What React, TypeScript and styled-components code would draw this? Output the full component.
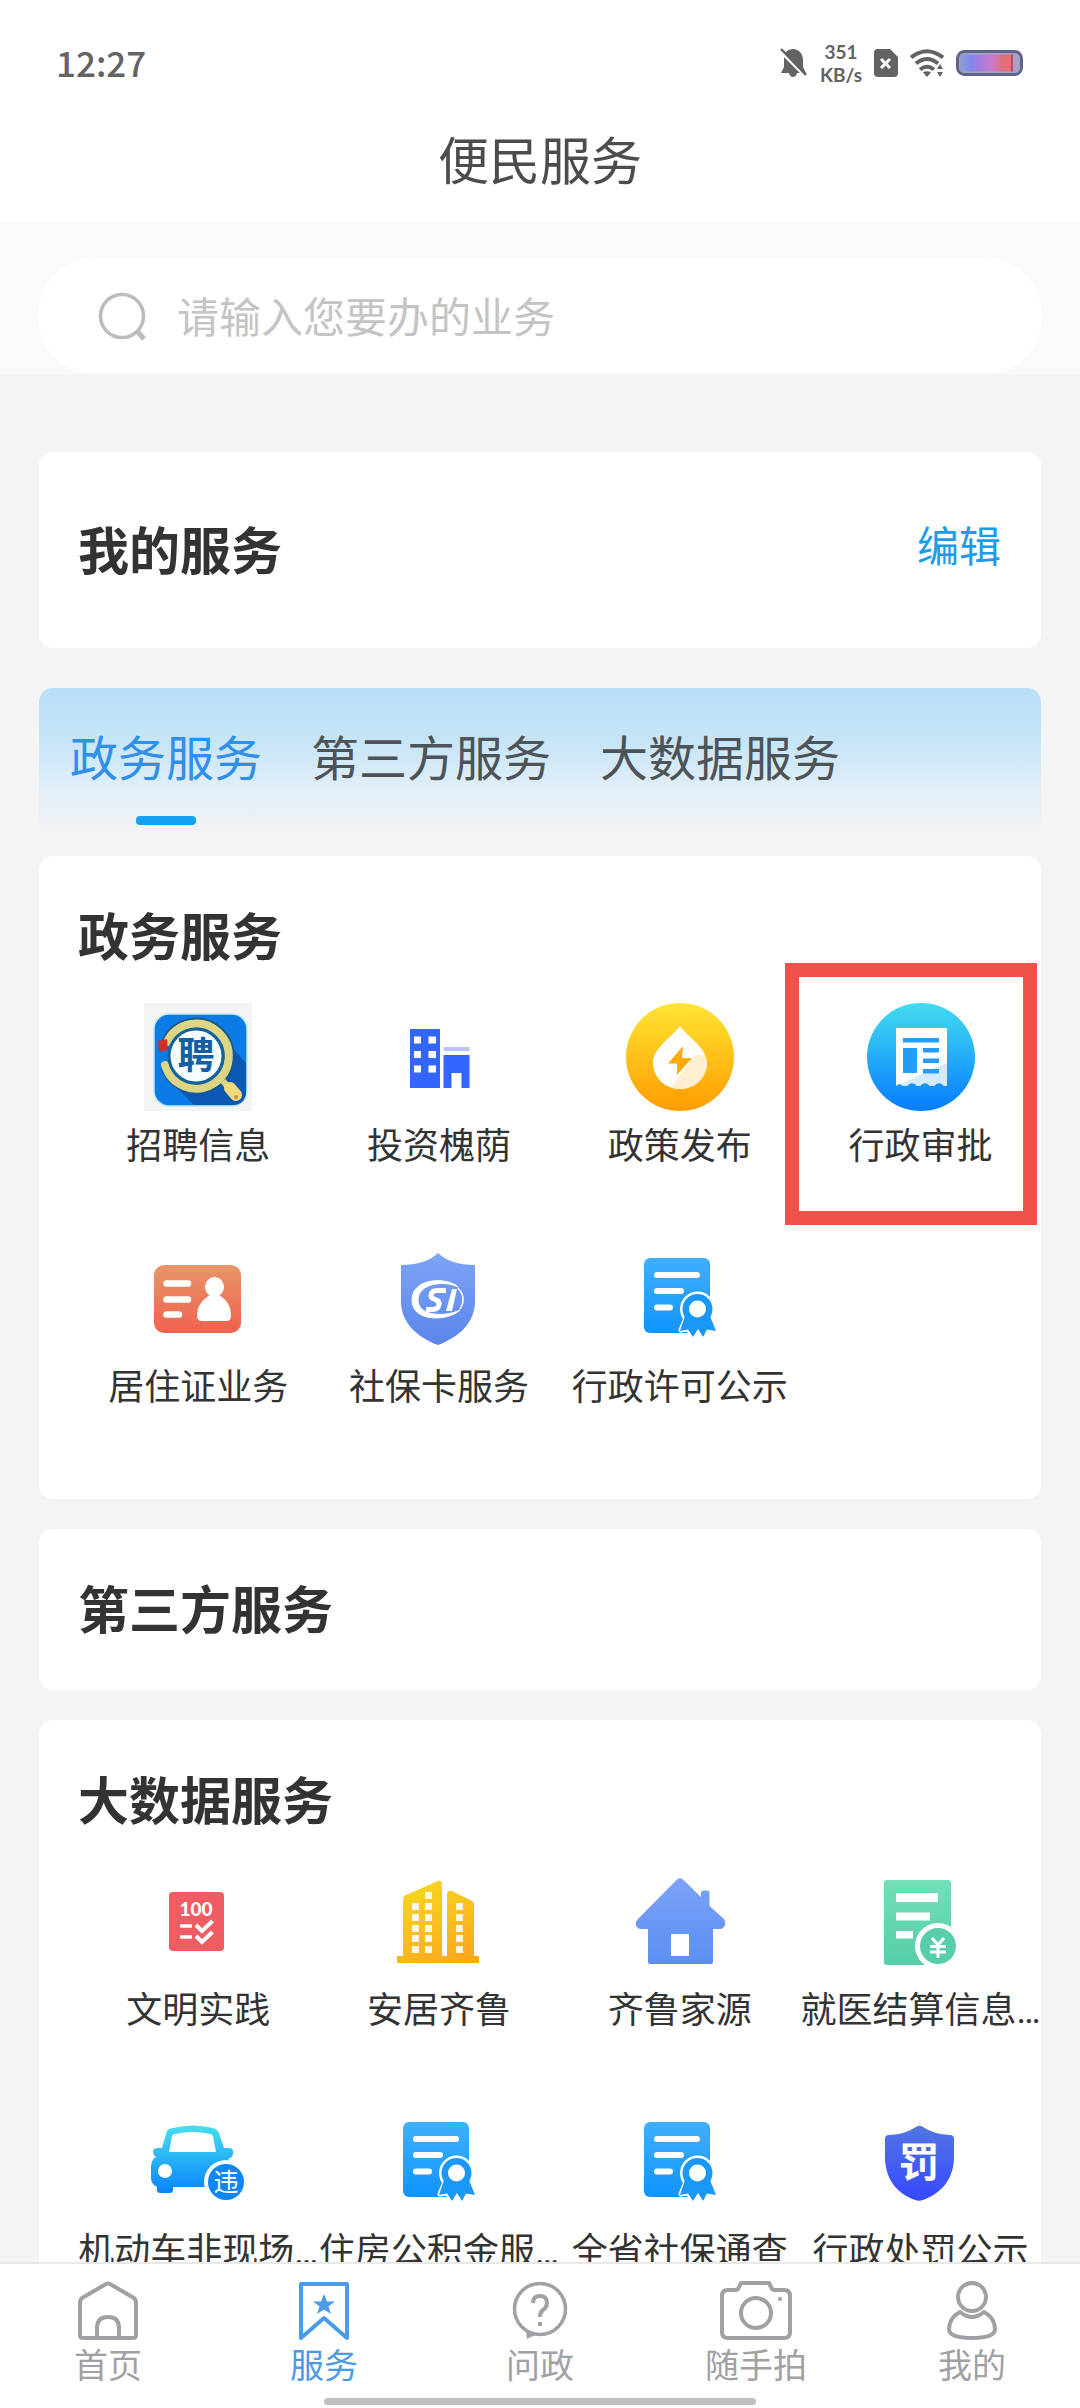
import React, { useId, useState } from 'react';
import styled, { createGlobalStyle } from 'styled-components';

const GlobalStyle = createGlobalStyle`
  * {
    box-sizing: border-box;
  }
  body {
    margin: 0;
    background: #f4f4f4;
    color: #333;
    font-family: "Noto Sans CJK SC", sans-serif;
  }
  button, input {
    font-family: inherit;
  }
  a {
    color: inherit;
    text-decoration: none;
  }
`;

const Page = styled.div`
  height: 100vh;
  display: flex;
  flex-direction: column;
`;

/* ---------- header ---------- */

const Header = styled.header`
  background: #fff;
  padding-bottom: 31px;
`;

const StatusBar = styled.div`
  display: flex;
  align-items: center;
  justify-content: space-between;
  height: 126px;
  padding: 0 57px 0 56px;
  color: #636363;
`;

const Clock = styled.time`
  padding-bottom: 4px;
  font-size: 35px;
  font-weight: 500;
`;

const StatusIcons = styled.div`
  display: flex;
  align-items: center;
  gap: 12px;
`;

const NetSpeed = styled.div`
  font-family: Lato, sans-serif;
  font-size: 19px;
  line-height: 23px;
  font-weight: 700;
  text-align: center;
`;

const PageTitle = styled.h1`
  margin: 0;
  font-size: 51px;
  line-height: 64px;
  font-weight: 400;
  text-align: center;
  color: #4c4c4c;
`;

/* ---------- content ---------- */

const Content = styled.main`
  flex: 1;
  min-height: 0;
  overflow-y: auto;
  scrollbar-width: none;
`;

const SearchBand = styled.div`
  background: #fafafa;
  padding: 37px 38px 0;
`;

const SearchBox = styled.label`
  display: flex;
  align-items: center;
  gap: 30px;
  height: 116px;
  padding: 0 60px;
  border-radius: 58px;
  background: #fff;
`;

const SearchInput = styled.input`
  flex: 1;
  min-width: 0;
  padding: 0 0 3px;
  border: 0;
  outline: 0;
  background: none;
  color: #333;
  font-size: 42px;
  line-height: 60px;

  &::placeholder {
    color: #c4c4c4;
    opacity: 1;
  }
`;

const Sections = styled.div`
  padding: 78px 39px 40px;
`;

const Card = styled.section`
  background: #fff;
  border-radius: 14px;
  padding: 40px 0 41px 39px;
  margin-bottom: 30px;
`;

const MyCard = styled(Card)`
  display: flex;
  justify-content: space-between;
  padding: 58px 40px 58px 39px;
  margin-bottom: 40px;
`;

const CardTitle = styled.h2`
  margin: 0 0 4px;
  font-size: 51px;
  line-height: 76px;
  font-weight: 700;
`;

const EditButton = styled.button`
  align-self: flex-start;
  padding: 0;
  border: 0;
  background: none;
  color: #1b9be8;
  font-size: 42px;
  line-height: 68px;
`;

const Tabs = styled.div`
  display: flex;
  gap: 49px;
  padding: 37px 31px 15px;
  margin-bottom: 16px;
  border-radius: 14px 14px 0 0;
  background: linear-gradient(#b8dff6, #c6e5f7 35%, #e3eff8 68%, #f4f4f4);
`;

const Tab = styled.button<{ $active: boolean }>`
  display: flex;
  flex-direction: column;
  align-items: center;
  padding: 0;
  border: 0;
  background: none;
  color: ${(props) => (props.$active ? '#2f8fea' : '#4d5356')};
  font-size: 48px;
  line-height: 60px;

  &::after {
    content: '';
    width: 60px;
    height: 9px;
    margin-top: 31px;
    border-radius: 4px;
    background: ${(props) => (props.$active ? '#18a0f5' : 'transparent')};
  }
`;

const Grid = styled.div`
  display: grid;
  grid-template-columns: repeat(4, 1fr);
  grid-auto-rows: 241px;
`;

const Item = styled.a<{ $marked?: boolean }>`
  position: relative;
  display: flex;
  flex-direction: column;
  align-items: center;
  padding-top: 27px;

  &::after {
    content: '';
    display: ${(props) => (props.$marked ? 'block' : 'none')};
    position: absolute;
    inset: -13px 4px -8px -15px;
    border: 14px solid #f0524b;
  }
`;

const ItemIcon = styled.svg`
  width: 108px;
  height: 108px;
`;

const ItemLabel = styled.span`
  margin-top: 11px;
  font-family: Roboto, "Noto Sans CJK SC", sans-serif;
  font-size: 36px;
  line-height: 50px;
  white-space: nowrap;
`;

/* ---------- bottom navigation ---------- */

const BottomBar = styled.footer`
  background: #fff;
  border-top: 2px solid #e8e8e8;
  padding: 16px 0 3px;
`;

const Nav = styled.nav`
  display: flex;
`;

const NavItem = styled.a<{ $active?: boolean }>`
  flex: 1;
  display: flex;
  flex-direction: column;
  align-items: center;
  color: ${(props) => (props.$active ? '#4a9be8' : '#a0a0a5')};
  font-size: 34px;
  line-height: 48px;
`;

const NavIcon = styled.svg`
  width: 80px;
  height: 60px;
  fill: none;
  stroke: currentColor;
  stroke-width: 4;
  stroke-linejoin: round;
`;

const HomeIndicator = styled.div`
  width: 40%;
  height: 7px;
  margin: 10px auto 0;
  border-radius: 4px;
  background: #c1c1c1;
`;

/* ---------- service icons ---------- */

type FadeProps = { id: string; from: string; to: string };

const Fade = ({ id, from, to }: FadeProps) => (
  <linearGradient id={id} x1="0" y1="0" x2="0" y2="1">
    <stop offset="0" stopColor={from} />
    <stop offset="1" stopColor={to} />
  </linearGradient>
);

const RecruitIcon = () => (
  <ItemIcon viewBox="0 0 108 108">
    <rect width="108" height="108" fill="#f4f4f4" />
    <rect x="10" y="11" width="93" height="92" rx="15" fill="#0c7be6" stroke="#bdeaf8" strokeWidth="1.5" />
    <path d="M78 33 102 60V88Q102 102 88 102H50L30 82Z" fill="#0a58b4" />
    <path d="M23 39A32.5 32.5 0 1 1 22 64" fill="none" stroke="#1a5a80" strokeWidth="11" />
    <path d="M23 39A32.5 32.5 0 1 1 21 62" fill="none" stroke="#dcd586" strokeWidth="8" strokeLinecap="round" />
    <circle cx="52" cy="53" r="27" fill="#f4fcff" stroke="#12639c" strokeWidth="3" />
    <path d="m14 38 9-2 1 11-9 2Z" fill="#cf2d2b" />
    <path d="m79 78 5 6" stroke="#dcd586" strokeWidth="6" />
    <path d="m86 85 6 7" stroke="#f0da7c" strokeWidth="12" strokeLinecap="round" />
    <circle cx="92" cy="94" r="2" fill="#c58a2c" />
    <text x="52" y="66" textAnchor="middle" fontSize="37" fontWeight="700" fill="#145ea6">聘</text>
  </ItemIcon>
);

const InvestIcon = () => (
  <ItemIcon viewBox="0 0 108 108">
    <path d="M25 26h30v59H25ZM58.500 52h26v33h-8V70h-10v15h-8Z" fill="#3366ff" />
    <path d="M58.500 44h26v4h-26Z" fill="#b7c5f4" />
    <path
      d="M29 33.500h7v7h-7ZM43.500 33.500h7.500v7h-7.500ZM29 48h7v7h-7ZM43.500 48h7.500v7h-7.500ZM29 62.500h7v7h-7ZM43.500 62.500h7.500v7h-7.500Z"
      fill="#fff"
    />
  </ItemIcon>
);

const PolicyIcon = () => (
  <ItemIcon viewBox="0 0 108 108">
    <defs>
      <Fade id="policy" from="#ffe534" to="#ff9c00" />
      <clipPath id="drop">
        <path d="M54 23C61 33 81 45 81 60A27 26 0 0 1 27 60C27 45 47 33 54 23Z" />
      </clipPath>
    </defs>
    <circle cx="54" cy="54" r="54" fill="url(#policy)" />
    <g clipPath="url(#drop)">
      <rect x="20" y="20" width="70" height="70" fill="#fff" />
      <path d="M69 52 44 86 90 90V52Z" fill="#fdefcf" />
    </g>
    <path d="M57 43 42 60.500h9L51 72 66 55H56Z" fill="#fdab0f" />
  </ItemIcon>
);

const ApprovalIcon = () => (
  <ItemIcon viewBox="0 0 108 108">
    <defs>
      <Fade id="approval" from="#42dcf1" to="#067cff" />
      <clipPath id="receipt">
        <path d="M29 25H80V83H77Q75 80 72 80T67 83H63Q61 80 58 80T53 83H50Q48 80 45 80T40 83H36Q34 81 32 81L29 83Z" />
      </clipPath>
    </defs>
    <circle cx="54" cy="54" r="54" fill="url(#approval)" />
    <g clipPath="url(#receipt)">
      <path d="M29 25h51v60H29Z" fill="#fff" />
      <path d="M80 60 62 67 29 84H80Z" fill="#d5eafc" />
    </g>
    <path d="M36 35h36v4.500H36ZM36 45h14v25H36ZM56 45h16v4.500H56ZM56 55.500h16v4.500H56ZM56 66h16v4.500H56Z" fill="#229dfb" />
  </ItemIcon>
);

const ResidenceIcon = () => (
  <ItemIcon viewBox="0 0 108 108">
    <defs>
      <Fade id="residence" from="#e8966a" to="#f0614f" />
    </defs>
    <rect x="10" y="21" width="87" height="68" rx="10" fill="url(#residence)" />
    <path d="M22.500 39.500H44M22.500 55.500H44M22.500 70.500H35" stroke="#fff" strokeWidth="6.500" strokeLinecap="round" />
    <ellipse cx="70.500" cy="43" rx="9.500" ry="10" fill="#fff" />
    <path d="M66 51h9C83 56 87 62 87 72Q87 77 82 77H58Q53 77 53 72C53 62 58 56 66 51Z" fill="#fff" />
  </ItemIcon>
);

const SocialCardIcon = () => (
  <ItemIcon viewBox="0 0 108 108">
    <defs>
      <Fade id="social" from="#7da4f8" to="#5a86ea" />
    </defs>
    <path d="M53 9C61 17 74 21 90 21V57C90 79 74 93 53 101C32 93 16 79 16 57V21C32 21 45 17 53 9Z" fill="url(#social)" />
    {/* tapering ring */}
    <path
      d="M73 43C63 33 27 33 27 56C27 79 64 77 75 66C62 73 33 73 33 56C33 39 60 36 73 43Z"
      fill="#fff"
      stroke="#fff"
      strokeWidth="1"
    />
    <path d="M73 44Q82 54 75 65" fill="none" stroke="#fff" strokeWidth="1.500" />
    <path
      d="M61 46.500H52Q47 46.500 46 51Q45.500 54 50 55.500Q55 57 54 61Q53 65.500 48 65.500H41"
      fill="none"
      stroke="#fff"
      strokeWidth="5"
    />
    <path d="M67 45H72L67 67H61Z" fill="#fff" />
  </ItemIcon>
);

const CertificateIcon = () => {
  const id = useId();
  return (
    <ItemIcon viewBox="0 0 108 108">
      <defs>
        <Fade id={id} from="#3fb0ff" to="#0f95fb" />
      </defs>
      <rect x="18" y="14" width="66" height="75" rx="6" fill={`url(#${id})`} />
      <path d="M31 31H71M31 47H55M31 63.500H44" stroke="#fff" strokeWidth="6" strokeLinecap="round" />
      <g fill="#fff" stroke="#fff" strokeWidth="5" strokeLinejoin="round">
        <path d="M60 74 55 86 62 85 67 92 72 84 77 92 81 85 89 86 83 74Z" />
        <circle cx="71.500" cy="65" r="15" />
      </g>
      <path d="M59 72 54 87 62 85.500 67 93 72 85 77 93 81 85.500 90 87 84 72Z" fill="#1b97f8" />
      <circle cx="71.500" cy="65" r="15" fill="#1b97f8" />
      <circle cx="71.500" cy="65" r="8.500" fill="#fff" />
    </ItemIcon>
  );
};

const CivilIcon = () => (
  <ItemIcon viewBox="0 0 108 108">
    <rect x="25" y="25" width="55" height="59" rx="4" fill="#f05c64" />
    <text x="52" y="49" textAnchor="middle" fontFamily="Lato, sans-serif" fontSize="19" fontWeight="900" fill="#fff">100</text>
    <path d="M36 59H48M36 70H48" stroke="#fff" strokeWidth="3.500" />
    <path d="M52 58 58 64 68.500 54M52 69 58 75 68.500 65" fill="none" stroke="#fff" strokeWidth="4" />
  </ItemIcon>
);

const HousingIcon = () => (
  <ItemIcon viewBox="0 0 108 108">
    <defs>
      <linearGradient id="housing" gradientUnits="userSpaceOnUse" x1="30" y1="15" x2="70" y2="96">
        <stop offset="0" stopColor="#f5d820" />
        <stop offset="1" stopColor="#fda81c" />
      </linearGradient>
    </defs>
    <path
      d="M18 32Q18 29 21 28L53 14Q57 13 57 17V89H62V28Q62 23 67 24L87 34Q89 35 89 38V89H94V96H12V89H18Z"
      fill="url(#housing)"
    />
    <path d="M57 20h5v69h-5Z" fill="#fff" />
    <g fill="#fff8de">
      <rect x="40" y="25" width="7" height="7" />
      {[36, 47, 58, 68, 79].map((y) => (
        <React.Fragment key={y}>
          <rect x="27" y={y} width="7" height="7" />
          <rect x="40" y={y} width="7" height="7" />
          <rect x="71" y={y} width="7" height="7" />
        </React.Fragment>
      ))}
    </g>
  </ItemIcon>
);

const HouseIcon = () => (
  <ItemIcon viewBox="0 0 108 108">
    <defs>
      <Fade id="house" from="#7ca3f8" to="#5a8ff2" />
    </defs>
    <path
      d="M51 12.500Q54 10 57 12.500L75 30V26Q75 23.500 77 23.500H81Q83.500 23.500 83.500 26V39L98 52Q101 57 97 61Q96 62 94 62H87V95Q87 97 85 97H24Q22 97 22 95V62H15Q12 62 11 60Q8 56 12 52Z"
      fill="url(#house)"
    />
    <rect x="45" y="67" width="18" height="22" rx="1" fill="#fff" />
  </ItemIcon>
);

const MedicalIcon = () => (
  <ItemIcon viewBox="0 0 108 108">
    <defs>
      <Fade id="medical" from="#72e0b6" to="#57cdaa" />
    </defs>
    <rect x="17" y="13" width="67" height="85" rx="3" fill="url(#medical)" />
    <path d="M29 26H71V35H29ZM29 45.500H63V53.500H29ZM29 64H46V71.500H29Z" fill="#fff" />
    <circle cx="71" cy="79" r="23" fill="#fff" />
    <circle cx="71" cy="79" r="18" fill="#58cdab" />
    <path d="m65 71 6 7 6-7M71 78v13M63 79.500h16M63 85h16" fill="none" stroke="#fff" strokeWidth="3" />
  </ItemIcon>
);

const CarIcon = () => (
  <ItemIcon viewBox="0 0 108 108">
    <defs>
      <Fade id="car" from="#47dfee" to="#0884fe" />
    </defs>
    <path
      d="M23 23Q24 21 29 20Q49 15 69 20Q73 21 75 25L80 40H86Q90 41 89 46Q88 50 84 51Q91 56 91 66V79H29V82Q29 85 26 85H16Q13 85 13 82V79Q7 76 7 70V59Q7 52 12 49Q9 47 9 44Q9 40 14 40H18Z"
      fill="url(#car)"
    />
    <path d="M25 44 28 28Q29 26 31 26Q49 22 66 26Q68 26 69 28L72 44Z" fill="#fff" />
    <circle cx="21" cy="63" r="7" fill="#fff" />
    <circle cx="82" cy="74" r="22" fill="#fff" />
    <circle cx="82" cy="74" r="18" fill="#0d87f4" />
    <text x="82" y="83" textAnchor="middle" fontSize="25" fill="#fff">违</text>
  </ItemIcon>
);

const PenaltyIcon = () => (
  <ItemIcon viewBox="0 0 108 108">
    <defs>
      <Fade id="penalty" from="#5276e2" to="#3648ff" />
    </defs>
    <path
      d="M48 19.500Q52.500 16 57 19.500Q66 26 83 27Q87 27 87 31V49C87 72 73 86 56 92Q52 93.500 48 92C31 86 18 72 18 49V31Q18 27 22 27Q39 26 48 19.500Z"
      fill="url(#penalty)"
    />
    <text x="52" y="69" textAnchor="middle" fontSize="41" fontWeight="700" fill="#fff">罚</text>
  </ItemIcon>
);

/* ---------- data ---------- */

type Service = { name: string; icon: React.FC; marked?: boolean };

const govServices: Service[] = [
  { name: '招聘信息', icon: RecruitIcon },
  { name: '投资槐荫', icon: InvestIcon },
  { name: '政策发布', icon: PolicyIcon },
  { name: '行政审批', icon: ApprovalIcon, marked: true },
  { name: '居住证业务', icon: ResidenceIcon },
  { name: '社保卡服务', icon: SocialCardIcon },
  { name: '行政许可公示', icon: CertificateIcon },
];

const dataServices: Service[] = [
  { name: '文明实践', icon: CivilIcon },
  { name: '安居齐鲁', icon: HousingIcon },
  { name: '齐鲁家源', icon: HouseIcon },
  { name: '就医结算信息…', icon: MedicalIcon },
  { name: '机动车非现场…', icon: CarIcon },
  { name: '住房公积金服…', icon: CertificateIcon },
  { name: '全省社保通查', icon: CertificateIcon },
  { name: '行政处罚公示', icon: PenaltyIcon },
];

const tabNames = ['政务服务', '第三方服务', '大数据服务'];

const ServiceGrid = ({ services }: { services: Service[] }) => (
  <Grid>
    {services.map(({ name, icon: Icon, marked }) => (
      <Item key={name} href="#" $marked={marked}>
        <Icon />
        <ItemLabel>{name}</ItemLabel>
      </Item>
    ))}
  </Grid>
);

const StatusBarIcons = () => (
  <StatusIcons>
    <svg width="28" height="30" viewBox="0 0 28 30" fill="currentColor">
      <path d="M13 1C19 1 23 6 23 12V19L26 25H17Q16 29 13 29T9 25H1L4 19V11Q4 1 13 1Z" />
      <path d="M-1 2 27 30" stroke="#fff" strokeWidth="3" />
      <path d="M1 1 26 27" stroke="currentColor" strokeWidth="2.500" />
    </svg>
    <NetSpeed>
      351
      <br />
      KB/s
    </NetSpeed>
    <svg width="24" height="28" viewBox="0 0 24 28">
      <path d="M4 0H16L24 8V24Q24 28 20 28H4Q0 28 0 24V4Q0 0 4 0Z" fill="currentColor" />
      <path d="m7 10 9 9M16 10l-9 9" stroke="#fff" strokeWidth="3" />
    </svg>
    <svg width="34" height="28" viewBox="0 0 34 28" fill="none" stroke="currentColor" strokeWidth="4">
      <path d="M1 8.500Q17-4 33 8.500M6 14.500Q17 5.500 28 14.500M10 20.500Q17 15 24 20.500" />
      <path d="M13 23.500Q17 21 21 23.500L17 28ZM30 15l3 5h-6ZM30 28l3-5h-6Z" fill="currentColor" stroke="none" />
    </svg>
    <svg width="67" height="26" viewBox="0 0 67 26">
      <defs>
        <linearGradient id="battery">
          <stop offset="0" stopColor="#8e9fca" />
          <stop offset="0.200" stopColor="#8189f2" />
          <stop offset="0.400" stopColor="#a77ddc" />
          <stop offset="0.620" stopColor="#ca7acb" />
          <stop offset="0.820" stopColor="#df6f78" />
        </linearGradient>
      </defs>
      <rect x="1.500" y="1.500" width="64" height="23" rx="7" fill="#a3a3c6" stroke="#62638c" strokeWidth="3" />
      <path d="M4 4.500H56V21.500H4Z" fill="url(#battery)" />
      <path d="M56 4.500v17" stroke="#b24d62" strokeWidth="2" />
    </svg>
  </StatusIcons>
);

const App: React.FC = () => {
  const [tab, setTab] = useState(0);

  return (
    <Page>
      <GlobalStyle />

      <Header>
        <StatusBar>
          <Clock>12:27</Clock>
          <StatusBarIcons />
        </StatusBar>
        <PageTitle>便民服务</PageTitle>
      </Header>

      <Content>
        <SearchBand>
          <SearchBox htmlFor="search">
            <svg width="49" height="49" viewBox="0 0 49 49" fill="none" stroke="#bcbcbc" strokeWidth="3.500">
              <circle cx="24" cy="24" r="21.500" />
              <path d="m39 39 7 8" strokeWidth="5" />
            </svg>
            <SearchInput id="search" type="text" placeholder="请输入您要办的业务" />
          </SearchBox>
        </SearchBand>

        <Sections>
          {/* my services */}
          <MyCard>
            <CardTitle>我的服务</CardTitle>
            <EditButton type="button">编辑</EditButton>
          </MyCard>

          <Tabs role="tablist">
            {tabNames.map((name, i) => (
              <Tab key={name} type="button" role="tab" aria-selected={i === tab} $active={i === tab} onClick={() => setTab(i)}>
                {name}
              </Tab>
            ))}
          </Tabs>

          <Card>
            <CardTitle>政务服务</CardTitle>
            <ServiceGrid services={govServices} />
          </Card>

          <Card>
            <CardTitle>第三方服务</CardTitle>
          </Card>

          <Card>
            <CardTitle>大数据服务</CardTitle>
            <ServiceGrid services={dataServices} />
          </Card>
        </Sections>
      </Content>

      <BottomBar>
        <Nav>
          <NavItem href="#">
            <NavIcon viewBox="0 0 80 60">
              <path d="M12 22Q12 20 14 18L38 4Q40 3 42 4L66 18Q68 20 68 22V55Q68 58 65 58H15Q12 58 12 55Z" />
              <path d="M29 58V48Q29 37 40 37T51 48V58" />
            </NavIcon>
            首页
          </NavItem>
          <NavItem href="#" $active>
            <NavIcon viewBox="0 0 80 60">
              <path d="M17 4H63V58L40 38L17 58Z" />
              <path
                d="M40 14 43 21.500H51L44.500 26.500 47 34 40 29.500 33 34 35.500 26.500 29 21.500H37Z"
                fill="currentColor"
                stroke="none"
              />
            </NavIcon>
            服务
          </NavItem>
          <NavItem href="#">
            <NavIcon viewBox="0 0 80 60">
              <circle cx="40" cy="29" r="25.500" strokeWidth="3.500" />
              <path d="M26 50 27 59 37 54Z" fill="currentColor" stroke="none" />
              <path d="M33 23Q33 16 40 16T47 23Q47 27 43 30Q40 32 40 37M40 42v4" />
            </NavIcon>
            问政
          </NavItem>
          <NavItem href="#">
            <NavIcon viewBox="0 0 80 60">
              <path d="M12 10H19Q22 10 23 7L25 3H53L55 7Q56 10 59 10H68Q74 10 74 16V52Q74 58 68 58H12Q6 58 6 52V16Q6 10 12 10Z" />
              <circle cx="40" cy="33" r="15" />
              <circle cx="64" cy="19" r="2" fill="currentColor" stroke="none" />
            </NavIcon>
            随手拍
          </NavItem>
          <NavItem href="#">
            <NavIcon viewBox="0 0 80 60">
              <ellipse cx="40" cy="17" rx="14" ry="14" />
              <path d="M28 32Q40 42 52 32Q63 38 63 49Q63 58 40 58T17 49Q17 38 28 32Z" />
            </NavIcon>
            我的
          </NavItem>
        </Nav>
        <HomeIndicator />
      </BottomBar>
    </Page>
  );
};

export default App;
